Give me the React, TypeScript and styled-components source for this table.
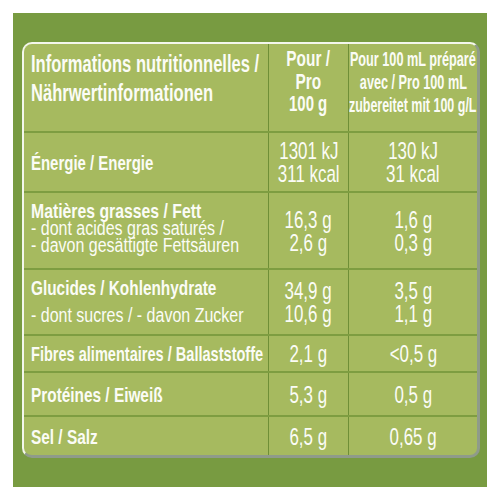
import styled, { createGlobalStyle } from "styled-components";

const GlobalStyle = createGlobalStyle`
  html, body { margin: 0; padding: 0; background: #ffffff; }
  body { font-family: "Liberation Sans", Arial, sans-serif; }
`;

const Page = styled.div`
  width: 500px;
  height: 500px;
  padding: 13px;
  box-sizing: border-box;
`;

const Frame = styled.div`
  width: 474px;
  height: 474px;
  box-sizing: border-box;
  background: #789b41;
  padding: 29px 7px 29px 9px;
`;

const Table = styled.div`
  height: 100%;
  box-sizing: border-box;
  background: #a6ba5f;
  border-top: 2px solid #f4f7ec;
  border-left: 2px solid #f4f7ec;
  border-right: 3px solid #8f9b8a;
  border-bottom: 3px solid #8f9b8a;
  border-radius: 10px;
  overflow: hidden;
  display: flex;
  flex-direction: column;
  color: #fbfcf6;
`;

const Row = styled.div<{ $h: number; $first?: boolean }>`
  display: grid;
  grid-template-columns: 244px 80px 1fr;
  height: ${(p) => p.$h}px;
  flex: none;
  box-sizing: border-box;
  border-top: ${(p) => (p.$first ? "none" : "2px solid #7e9d41")};
`;

const Label = styled.div<{ $top?: boolean; $pt?: number; $pb?: number }>`
  display: flex;
  flex-direction: column;
  align-items: flex-start;
  justify-content: ${(p) => (p.$top ? "flex-start" : "center")};
  padding: ${(p) => p.$pt ?? 0}px 0 ${(p) => p.$pb ?? 0}px 7px;
  min-width: 0;
`;

const Value = styled.div<{ $top?: boolean; $pt?: number }>`
  border-left: 1px solid #6f8f37;
  display: flex;
  flex-direction: column;
  align-items: center;
  justify-content: ${(p) => (p.$top ? "flex-start" : "center")};
  padding-top: ${(p) => p.$pt ?? 0}px;
  min-width: 0;
`;

// the packaging font is a very narrow grotesque: squeeze a regular one
const Line = styled.span<{
  $size: number;
  $lh: number;
  $k: number;
  $bold?: boolean;
  $center?: boolean;
  $mt?: number;
}>`
  display: block;
  flex: none;
  white-space: nowrap;
  font-size: ${(p) => p.$size}px;
  line-height: ${(p) => p.$lh}px;
  font-weight: ${(p) => (p.$bold ? 700 : 400)};
  margin-top: ${(p) => p.$mt ?? 0}px;
  transform: scaleX(${(p) => p.$k});
  transform-origin: ${(p) => (p.$center ? "center" : "left")} center;
`;

const Head = (p: { children: string }) => (
  <Line $size={23} $lh={29} $k={0.72} $bold>
    {p.children}
  </Line>
);
const Title = (p: { children: string; k: number }) => (
  <Line $size={20.5} $lh={19} $k={p.k} $bold>
    {p.children}
  </Line>
);
const Sub = (p: { children: string; mt?: number }) => (
  <Line $size={20} $lh={17.5} $k={0.8} $mt={p.mt}>
    {p.children}
  </Line>
);
const Num = (p: { children: string }) => (
  <Line $size={24.5} $lh={23} $k={0.69} $center>
    {p.children}
  </Line>
);

type Item = {
  title: string;
  k: number;
  subs?: string[];
  subGap?: number;
  lift?: number;
  per100g: string[];
  per100ml: string[];
  h: number;
};

const rows: Item[] = [
  { title: "Énergie / Energie", k: 0.73, per100g: ["1301 kJ", "311 kcal"], per100ml: ["130 kJ", "31 kcal"], h: 60 },
  {
    title: "Matières grasses / Fett",
    k: 0.77,
    subs: ["- dont acides gras saturés /", "- davon gesättigte Fettsäuren"],
    lift: 6,
    per100g: ["16,3 g", "2,6 g"],
    per100ml: ["1,6 g", "0,3 g"],
    h: 77,
  },
  {
    title: "Glucides / Kohlenhydrate",
    k: 0.75,
    subs: ["- dont sucres / - davon Zucker"],
    subGap: 10,
    lift: 2,
    per100g: ["34,9 g", "10,6 g"],
    per100ml: ["3,5 g", "1,1 g"],
    h: 66,
  },
  { title: "Fibres alimentaires / Ballaststoffe", k: 0.71, per100g: ["2,1 g"], per100ml: ["<0,5 g"], h: 37 },
  { title: "Protéines / Eiweiß", k: 0.75, per100g: ["5,3 g"], per100ml: ["0,5 g"], h: 44 },
  { title: "Sel / Salz", k: 0.75, per100g: ["6,5 g"], per100ml: ["0,65 g"], h: 40 },
];

export default function App() {
  return (
    <Page>
      <GlobalStyle />
      <Frame>
        <Table>
          <Row $h={87} $first>
            <Label $top $pt={6}>
              <Head>Informations nutritionnelles /</Head>
              <Head>Nährwertinformationen</Head>
            </Label>
            <Value $top $pt={4}>
              <Line $size={22} $lh={22.5} $k={0.7} $bold $center>Pour /</Line>
              <Line $size={22} $lh={22.5} $k={0.7} $bold $center>Pro</Line>
              <Line $size={22} $lh={22.5} $k={0.68} $bold $center>100 g</Line>
            </Value>
            <Value $top $pt={4}>
              <Line $size={19.5} $lh={23} $k={0.65} $bold $center>Pour 100 mL préparé</Line>
              <Line $size={19.5} $lh={23} $k={0.65} $bold $center>avec / Pro 100 mL</Line>
              <Line $size={19.5} $lh={23} $k={0.64} $bold $center>zubereitet mit 100 g/L</Line>
            </Value>
          </Row>
          {rows.map((r) => (
            <Row key={r.title} $h={r.h}>
              <Label $pb={r.lift}>
                <Title k={r.k}>{r.title}</Title>
                {r.subs?.map((s, i) => (
                  <Sub key={s} mt={i === 0 ? r.subGap : 0}>
                    {s}
                  </Sub>
                ))}
              </Label>
              <Value>
                {r.per100g.map((v) => (
                  <Num key={v}>{v}</Num>
                ))}
              </Value>
              <Value>
                {r.per100ml.map((v) => (
                  <Num key={v}>{v}</Num>
                ))}
              </Value>
            </Row>
          ))}
        </Table>
      </Frame>
    </Page>
  );
}
